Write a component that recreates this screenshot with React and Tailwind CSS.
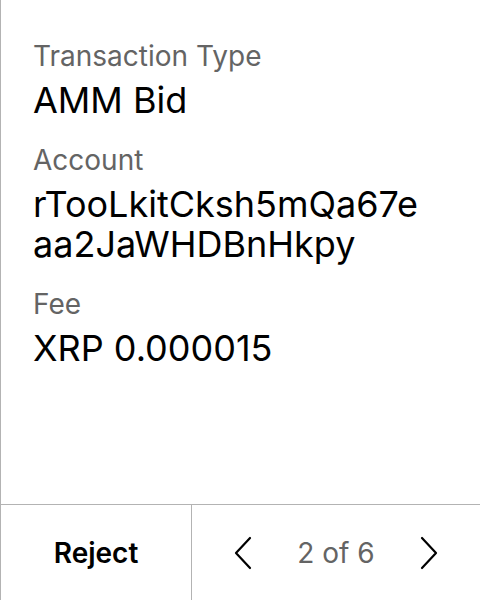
import React from 'react';

function Field({ label, value }) {
  return (
    <div className="flex flex-col gap-[8px]">
      <div className="text-[28px] leading-[32px] text-[#646464]">{label}</div>
      <div className="text-[36px] leading-[40px] text-black break-all">{value}</div>
    </div>
  );
}

function Chevron({ dir }) {
  return (
    <svg width="20" height="34" viewBox="0 0 20 34" fill="none">
      <path
        d={dir === 'left' ? 'M17 2 L3 17 L17 32' : 'M3 2 L17 17 L3 32'}
        stroke="black"
        strokeWidth="2.2"
        strokeLinecap="round"
        strokeLinejoin="round"
      />
    </svg>
  );
}

export default function App() {
  return (
    <div
      className="w-[480px] h-[600px] bg-white flex flex-col border-l border-[#b3b3b3]"
      style={{ fontFamily: 'Inter, "Noto Sans", sans-serif' }}
    >
      {/* details */}
      <div className="flex-1 flex flex-col gap-[24px] pl-8 pr-[46px] pt-[40px]">
        <Field label="Transaction Type" value="AMM Bid" />
        <Field label="Account" value="rTooLkitCksh5mQa67eaa2JaWHDBnHkpy" />
        <Field label="Fee" value="XRP 0.000015" />
      </div>

      {/* footer */}
      <div className="h-[96px] flex border-t border-[#b3b3b3]">
        <button className="w-[191px] flex items-center justify-center text-[28px] font-semibold text-black border-r border-[#b3b3b3]">
          Reject
        </button>
        <div className="flex-1 flex items-center justify-between px-[41px]">
          <Chevron dir="left" />
          <span className="text-[28px] text-[#646464]">2 of 6</span>
          <Chevron dir="right" />
        </div>
      </div>
    </div>
  );
}
